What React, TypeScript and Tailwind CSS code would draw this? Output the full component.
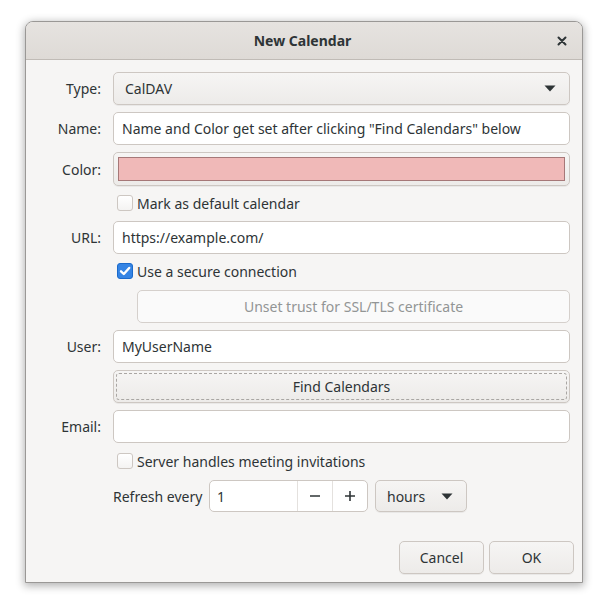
import React from "react";

const font = { fontFamily: '"Noto Sans", "Open Sans", sans-serif' };

function Caret() {
  return (
    <svg width="12" height="7" viewBox="0 0 12 7" className="shrink-0">
      <path d="M0.5 0.5 L11.5 0.5 L6 6.5 Z" fill="#2e3436" />
    </svg>
  );
}

function CheckBox({ checked, label }: { checked?: boolean; label: string }) {
  return (
    <div className="flex h-[20px] items-center gap-[4px] pl-[4px]">
      {checked ? (
        <span className="flex h-[16px] w-[16px] items-center justify-center rounded-[3px] border border-[#1b6acb] bg-[#3584e4]">
          <svg width="12" height="12" viewBox="0 0 12 12">
            <path d="M2 6.3 L4.8 9 L10.2 3" fill="none" stroke="#fff" strokeWidth="2.4" strokeLinecap="round" strokeLinejoin="round" />
          </svg>
        </span>
      ) : (
        <span className="h-[16px] w-[16px] rounded-[3px] border border-[#cdc7c2] bg-gradient-to-b from-white to-[#f4f3f2]" />
      )}
      <span className="text-[14px] text-[#2e3436]">{label}</span>
    </div>
  );
}

function Entry({ value }: { value?: string }) {
  return (
    <div className="flex h-[33px] items-center rounded-[5px] border border-[#cdc7c2] bg-white px-[8px] text-[14px] text-[#2e3436]">
      {value}
    </div>
  );
}

function Label({ text }: { text: string }) {
  return <div className="flex h-[33px] items-center justify-end text-[14px] text-[#2e3436]">{text}</div>;
}

const btn =
  "rounded-[5px] border border-[#cdc7c2] bg-gradient-to-b from-[#f6f5f4] to-[#edebe9] text-[14px] text-[#2e3436] shadow-[0_1px_0_rgba(0,0,0,0.05)]";

export default function App() {
  return (
    <div className="min-h-screen bg-white pl-[25px] pt-[21px]" style={font}>
      <div className="flex h-[562px] w-[558px] flex-col overflow-hidden rounded-t-[8px] border border-[#9a9896] bg-[#f6f5f4] shadow-[0_2px_8px_1px_rgba(0,0,0,0.3)]">
        <div className="flex h-[38px] shrink-0 items-center border-b border-[#c0bbb6] bg-gradient-to-b from-[#e6e3e0] to-[#dedad6] px-[12px]">
          <div className="flex-1" />
          <div className="text-[14px] font-bold text-[#2e3436]">New Calendar</div>
          <div className="flex flex-1 justify-end pr-[3px]">
            <svg width="10" height="10" viewBox="0 0 10 10">
              <path d="M1.5 1.5 L8.5 8.5 M8.5 1.5 L1.5 8.5" stroke="#2e3436" strokeWidth="2" strokeLinecap="round" />
            </svg>
          </div>
        </div>

        <div className="grid flex-1 grid-cols-[63px_1fr] content-start gap-x-3 gap-y-[7px] px-[12px] pt-[12px]">
          <Label text="Type:" />
          <div className={`${btn} flex h-[33px] items-center justify-between pl-[11px] pr-[13px]`}>
            <span>CalDAV</span>
            <Caret />
          </div>

          <Label text="Name:" />
          <Entry value={'Name and Color get set after clicking "Find Calendars" below'} />

          <div className="flex h-[34px] items-center justify-end text-[14px] text-[#2e3436]">Color:</div>
          <div className={`${btn} flex h-[34px] items-stretch p-[4px]`}>
            <div className="flex-1 border border-[#a67878] bg-[#f0b9b8]" />
          </div>

          <div />
          <CheckBox label="Mark as default calendar" />

          <div className="mt-px">
            <Label text="URL:" />
          </div>
          <div className="mt-px">
            <Entry value="https://example.com/" />
          </div>

          <div />
          <CheckBox checked label="Use a secure connection" />

          <div />
          <div className="mt-[2px] pl-[24px]">
            <div className="flex h-[33px] items-center justify-center rounded-[5px] border border-[#d5d0cc] bg-[#fafafa] text-[14px] text-[#929595]">
              Unset trust for SSL/TLS certificate
            </div>
          </div>

          <Label text="User:" />
          <Entry value="MyUserName" />

          <div />
          <div className={`${btn} h-[33px] p-[2px]`}>
            <div className="flex h-full items-center justify-center rounded-[3px] border border-dashed border-[#a9a6a3]">
              Find Calendars
            </div>
          </div>

          <Label text="Email:" />
          <Entry />

          <div />
          <div className="mt-px">
            <CheckBox label="Server handles meeting invitations" />
          </div>

          <div />
          <div className="mt-[2px] flex h-[32px] items-center">
            <span className="mr-[6px] w-[90px] text-[14px] text-[#2e3436]">Refresh every</span>
            <div className="flex h-[32px] w-[159px] overflow-hidden rounded-[5px] border border-[#cdc7c2] bg-white text-[#2e3436]">
              <div className="flex flex-1 items-center pl-[7px] text-[14px]">1</div>
              <div className="flex w-[35px] items-center justify-center border-l border-[#e4e1de]">
                <svg width="12" height="12" viewBox="0 0 12 12">
                  <path d="M1 6 H11" stroke="#2e3436" strokeWidth="1.6" />
                </svg>
              </div>
              <div className="flex w-[35px] items-center justify-center border-l border-[#e4e1de]">
                <svg width="12" height="12" viewBox="0 0 12 12">
                  <path d="M1 6 H11 M6 1 V11" stroke="#2e3436" strokeWidth="1.6" />
                </svg>
              </div>
            </div>
            <div className={`${btn} ml-[7px] flex h-[32px] w-[92px] items-center justify-between pl-[11px] pr-[13px]`}>
              <span>hours</span>
              <Caret />
            </div>
          </div>
        </div>

        <div className="flex shrink-0 justify-end gap-[5px] pb-[8px] pr-[8px]">
          <div className={`${btn} flex h-[33px] w-[85px] items-center justify-center`}>Cancel</div>
          <div className={`${btn} flex h-[33px] w-[85px] items-center justify-center`}>OK</div>
        </div>
      </div>
    </div>
  );
}
